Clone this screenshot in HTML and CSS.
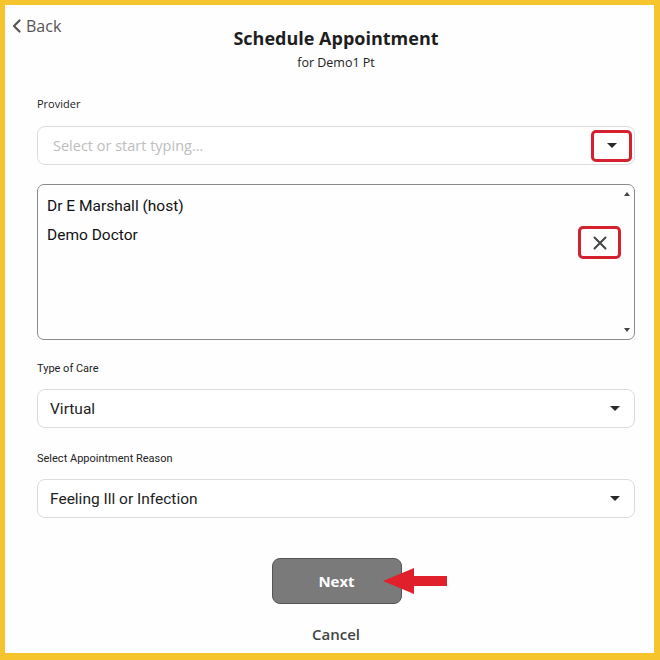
FILE: index.html
```html
<!DOCTYPE html>
<html lang="en">
<head>
    <meta charset="UTF-8">
    <title>Schedule Appointment</title>
    <link rel="stylesheet" href="styles.css">
</head>
<body>
    <div class="frame">
        <header class="top">
            <a class="back" href="#">
                <svg width="9" height="14" viewBox="0 0 9 14"><path d="M7.5 1.5 L2 7 L7.5 12.5" fill="none" stroke="#555" stroke-width="2.2" stroke-linecap="round" stroke-linejoin="round"/></svg>
                <span>Back</span>
            </a>
            <div class="heading">
                <h1>Schedule Appointment</h1>
                <p>for Demo1 Pt</p>
            </div>
        </header>

        <main class="form">
            <label class="label">Provider</label>
            <div class="field search">
                <span class="placeholder">Select or start typing...</span>
                <span class="hl-box caret-box"><span class="caret"></span></span>
            </div>

            <div class="list">
                <div class="list-items">
                    <div class="item">Dr E Marshall (host)</div>
                    <div class="item item-row">
                        <span>Demo Doctor</span>
                        <span class="hl-box remove-box">
                            <svg width="14" height="14" viewBox="0 0 14 14"><path d="M1.5 1.5 L12.5 12.5 M12.5 1.5 L1.5 12.5" stroke="#444" stroke-width="2" stroke-linecap="round"/></svg>
                        </span>
                    </div>
                </div>
                <div class="scroll">
                    <span class="tri-up"></span>
                    <span class="tri-down"></span>
                </div>
            </div>

            <label class="label">Type of Care</label>
            <div class="field select">
                <span>Virtual</span>
                <span class="caret"></span>
            </div>

            <label class="label">Select Appointment Reason</label>
            <div class="field select">
                <span>Feeling Ill or Infection</span>
                <span class="caret"></span>
            </div>

            <div class="actions">
                <div class="next-wrap">
                    <button class="next">Next</button>
                    <svg class="pointer" width="66" height="28" viewBox="0 0 66 28"><path d="M0 14 L31 1 L31 9 L64 9 L64 19 L31 19 L31 27 Z" fill="#e0202a"/></svg>
                </div>
                <a class="cancel" href="#">Cancel</a>
            </div>
        </main>
    </div>
</body>
</html>
```
FILE: styles.css
```css
* {
    margin: 0;
    padding: 0;
    box-sizing: border-box;
}

body {
    font-family: 'Open Sans', sans-serif;
    color: #222;
    background-color: #f6c42c;
}

.frame {
    width: 660px;
    height: 660px;
    border-style: solid;
    border-color: #f6c42c;
    border-width: 5px 6px 7px 5px;
    background: #fefefe;
}

.top {
    display: grid;
}

.back {
    grid-area: 1 / 1;
    justify-self: start;
    display: flex;
    align-items: center;
    gap: 5px;
    margin: 10px 0 0 7px;
    color: #555;
    font-size: 16px;
    text-decoration: none;
    height: 22px;
}

.heading {
    grid-area: 1 / 1;
    margin: 20px 19px 0 32px;
    text-align: center;
}

.heading h1 {
    font-size: 18px;
    font-weight: 700;
    line-height: 26px;
    color: #1e1e1e;
}

.heading p {
    font-size: 12.5px;
    line-height: 18px;
    margin-top: 3px;
    color: #222;
}

.form {
    display: flex;
    flex-direction: column;
    margin: 0 19px 0 32px;
    padding-top: 25px;
}

.label {
    font-family: 'Roboto', sans-serif;
    font-size: 11px;
    line-height: 14px;
    color: #222;
}

.form > .label:first-child {
    font-family: 'Open Sans', sans-serif;
    font-size: 11px;
}

.field {
    display: flex;
    align-items: center;
    justify-content: space-between;
    height: 39px;
    border: 1px solid #dcdcdc;
    border-radius: 8px;
    margin-top: 13px;
    background: #fff;
}

.search {
    padding: 0 2px 0 15px;
    margin-top: 15px;
    margin-bottom: 19px;
}

.placeholder {
    font-size: 14.5px;
    color: #bdbdbd;
}

.select {
    padding: 0 14px 0 12px;
    font-family: 'Roboto', sans-serif;
    font-size: 15.5px;
    color: #222;
    margin-bottom: 24px;
}

.caret {
    width: 0;
    height: 0;
    border-left: 5px solid transparent;
    border-right: 5px solid transparent;
    border-top: 5px solid #2a2a2a;
}

.hl-box {
    display: flex;
    align-items: center;
    justify-content: center;
    border: 3px solid #d5212f;
    border-radius: 5px;
}

.caret-box {
    width: 41px;
    height: 32px;
}

.list {
    display: flex;
    height: 156px;
    border: 1px solid #8a8a8a;
    border-radius: 7px;
    margin-bottom: 22px;
}

.list-items {
    flex: 1;
    padding: 12px 0 0 9px;
    font-family: 'Roboto', sans-serif;
    font-size: 15.5px;
    color: #111;
}

.item {
    line-height: 18px;
    margin-bottom: 11px;
}

.item-row {
    display: flex;
    justify-content: space-between;
    align-items: flex-start;
}

.remove-box {
    width: 43px;
    height: 33px;
    margin-top: 0;
    margin-right: -1px;
}

.scroll {
    width: 14px;
    display: flex;
    flex-direction: column;
    justify-content: space-between;
    align-items: center;
    padding: 7px 0 7px;
}

.tri-up {
    border-left: 3px solid transparent;
    border-right: 3px solid transparent;
    border-bottom: 4px solid #444;
}

.tri-down {
    border-left: 3px solid transparent;
    border-right: 3px solid transparent;
    border-top: 4px solid #444;
}

.actions {
    display: flex;
    flex-direction: column;
    align-items: center;
    margin-top: 16px;
}

.next-wrap {
    display: flex;
    align-items: center;
    margin-right: -48px;
}

.next {
    width: 130px;
    height: 46px;
    border: 1.5px solid #555;
    border-radius: 8px;
    background: #7a7a7a;
    color: #fff;
    font-family: 'Open Sans', sans-serif;
    font-size: 15px;
    font-weight: 700;
}

.pointer {
    margin-left: -19px;
}

.cancel {
    margin-top: 20px;
    font-size: 15px;
    font-weight: 600;
    color: #444;
    text-decoration: none;
}
```
